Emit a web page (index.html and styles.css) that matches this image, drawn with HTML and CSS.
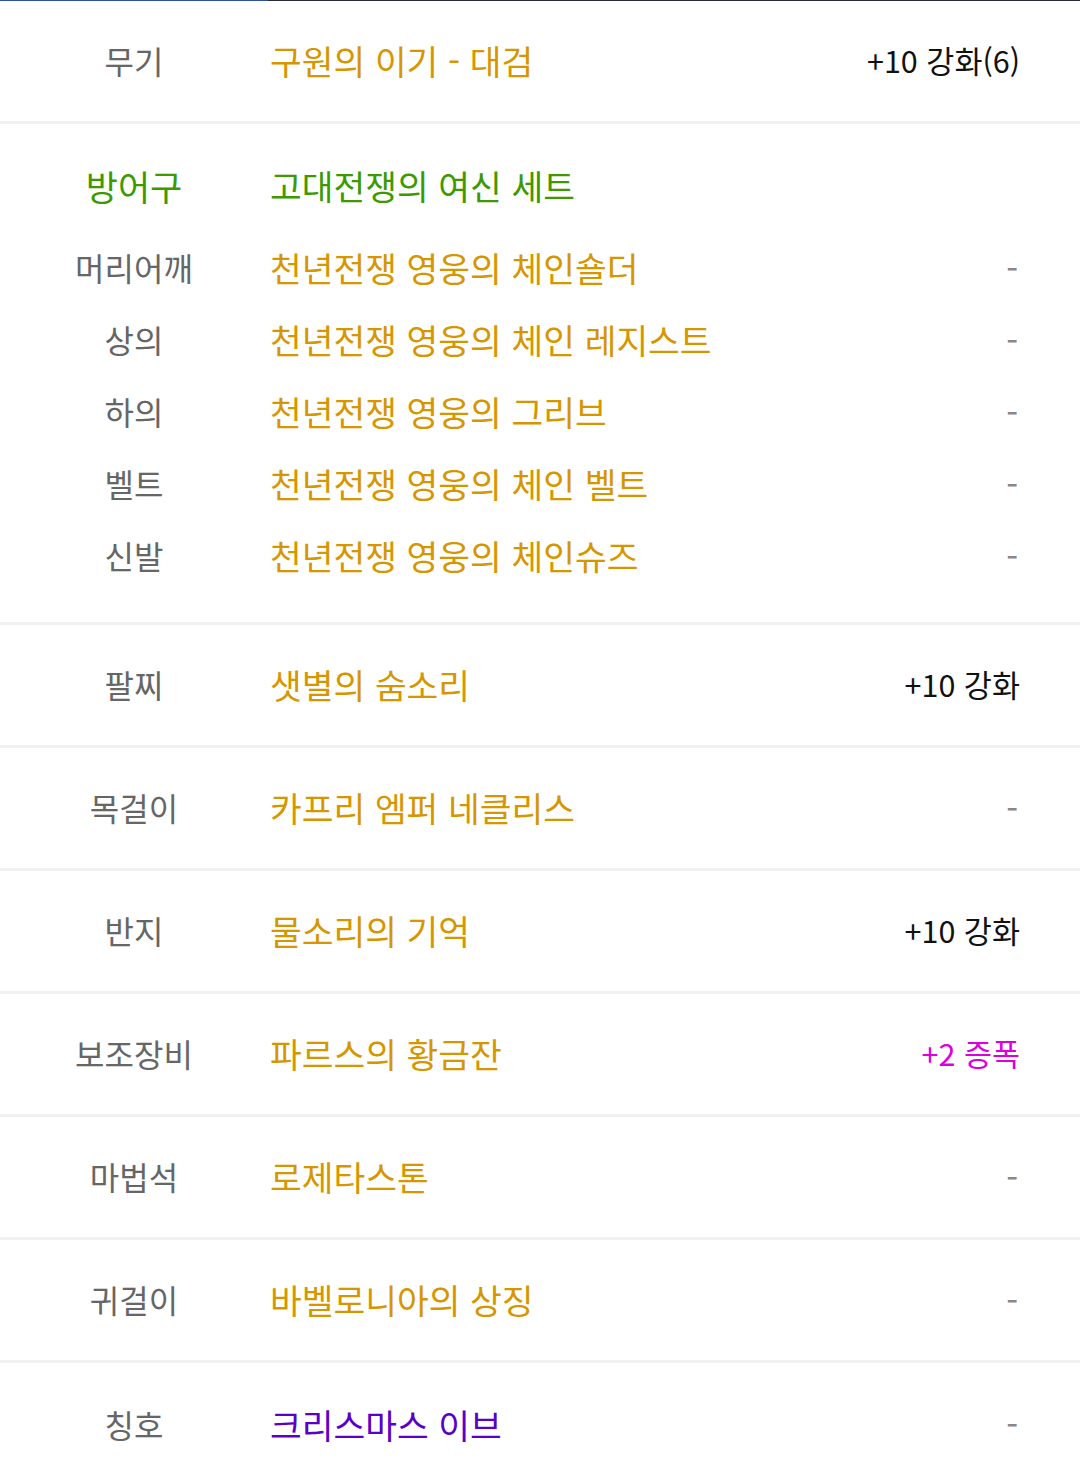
FILE: index.html
```html
<!DOCTYPE html>
<html lang="ko">
<head>
    <meta charset="UTF-8">
    <meta name="viewport" content="width=device-width, initial-scale=1.0">
    <title>장착 아이템</title>
    <link rel="stylesheet" href="styles.css">
</head>
<body>
    <div class="top-line"><div class="top-line-fill"></div></div>

    <div class="equip-list">
        <div class="equip-row">
            <div class="slot">무기</div>
            <div class="item-name epic">구원의 이기 - 대검</div>
            <div class="item-value">+10 강화(6)</div>
        </div>

        <div class="armor-group">
            <div class="sub-row set-header">
                <div class="slot set">방어구</div>
                <div class="item-name set">고대전쟁의 여신 세트</div>
                <div class="item-value"></div>
            </div>
            <div class="sub-row">
                <div class="slot">머리어깨</div>
                <div class="item-name epic">천년전쟁 영웅의 체인숄더</div>
                <div class="item-value none">-</div>
            </div>
            <div class="sub-row">
                <div class="slot">상의</div>
                <div class="item-name epic">천년전쟁 영웅의 체인 레지스트</div>
                <div class="item-value none">-</div>
            </div>
            <div class="sub-row">
                <div class="slot">하의</div>
                <div class="item-name epic">천년전쟁 영웅의 그리브</div>
                <div class="item-value none">-</div>
            </div>
            <div class="sub-row">
                <div class="slot">벨트</div>
                <div class="item-name epic">천년전쟁 영웅의 체인 벨트</div>
                <div class="item-value none">-</div>
            </div>
            <div class="sub-row">
                <div class="slot">신발</div>
                <div class="item-name epic">천년전쟁 영웅의 체인슈즈</div>
                <div class="item-value none">-</div>
            </div>
        </div>

        <div class="equip-row">
            <div class="slot">팔찌</div>
            <div class="item-name epic">샛별의 숨소리</div>
            <div class="item-value">+10 강화</div>
        </div>

        <div class="equip-row">
            <div class="slot">목걸이</div>
            <div class="item-name epic">카프리 엠퍼 네클리스</div>
            <div class="item-value none">-</div>
        </div>

        <div class="equip-row">
            <div class="slot">반지</div>
            <div class="item-name epic">물소리의 기억</div>
            <div class="item-value">+10 강화</div>
        </div>

        <div class="equip-row">
            <div class="slot">보조장비</div>
            <div class="item-name epic">파르스의 황금잔</div>
            <div class="item-value amplify">+2 증폭</div>
        </div>

        <div class="equip-row">
            <div class="slot">마법석</div>
            <div class="item-name epic">로제타스톤</div>
            <div class="item-value none">-</div>
        </div>

        <div class="equip-row">
            <div class="slot">귀걸이</div>
            <div class="item-name epic">바벨로니아의 상징</div>
            <div class="item-value none">-</div>
        </div>

        <div class="equip-row">
            <div class="slot">칭호</div>
            <div class="item-name unique">크리스마스 이브</div>
            <div class="item-value none">-</div>
        </div>
    </div>
</body>
</html>
```

FILE: styles.css
```css
* {
    margin: 0;
    padding: 0;
    box-sizing: border-box;
}

body {
    font-family: "Noto Sans CJK KR", "Noto Sans", sans-serif;
    background: #fff;
    color: #111;
}

.top-line {
    height: 1px;
    background: #262a33;
}

.top-line-fill {
    width: 268px;
    height: 100%;
    background: #2d4f9c;
}

.equip-row,
.armor-group {
    border-bottom: 3px solid #f1f1f1;
}

.equip-row:last-child {
    border-bottom: none;
}

.equip-row,
.sub-row {
    display: grid;
    grid-template-columns: 270px 1fr auto;
    align-items: center;
    padding-right: 60px;
}

.equip-row {
    height: 123px;
    padding-bottom: 2px;
}

.armor-group {
    padding: 25px 0 31px;
}

.sub-row {
    height: 72px;
}

.set-header {
    margin-bottom: 10px;
}

.slot {
    text-align: center;
    font-size: 32px;
    color: #666;
    padding-right: 2px;
}

.slot.set {
    font-size: 35px;
}

.item-name {
    font-size: 34.5px;
    white-space: nowrap;
}

.item-name.epic {
    color: #d69600;
}

.set {
    color: #3c9a00;
}

.item-name.unique {
    color: #5a00c8;
}

.item-value {
    font-size: 30.5px;
    color: #111;
    text-align: right;
}

.item-value.none {
    color: #888;
    font-size: 34px;
    padding-right: 2px;
}

.item-value.amplify {
    color: #dd00dd;
}
```
